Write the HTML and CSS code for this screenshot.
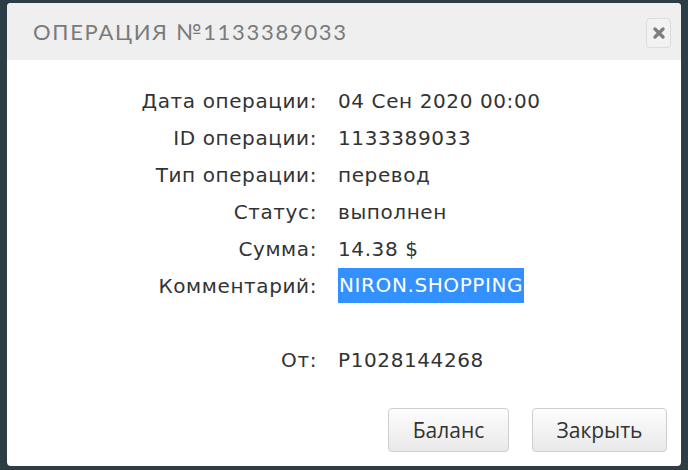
FILE: index.html
```html
<!DOCTYPE html>
<html lang="ru">
<head>
<meta charset="utf-8">
<link rel="stylesheet" href="styles.css">
</head>
<body>
<div class="modal">
  <div class="modal-header">
    <h3 class="modal-title">ОПЕРАЦИЯ №1133389033</h3>
    <button class="close-btn" type="button" aria-label="close">
      <svg width="12" height="12" viewBox="0 0 12 12"><path d="M2 2 L10 10 M10 2 L2 10" stroke="#7d7d7d" stroke-width="3.2" stroke-linecap="round"/></svg>
    </button>
  </div>
  <div class="modal-body">
    <div class="info">
      <div class="lbl">Дата операции:</div><div class="val">04 Сен 2020 00:00</div>
      <div class="lbl">ID операции:</div><div class="val">1133389033</div>
      <div class="lbl">Тип операции:</div><div class="val">перевод</div>
      <div class="lbl">Статус:</div><div class="val">выполнен</div>
      <div class="lbl">Сумма:</div><div class="val">14.38 $</div>
      <div class="lbl">Комментарий:</div><div class="val"><span class="sel">NIRON.SHOPPING</span></div>
      <div class="lbl"></div><div class="val"></div>
      <div class="lbl">От:</div><div class="val">P1028144268</div>
    </div>
  </div>
  <div class="modal-footer">
    <button class="btn" type="button">Баланс</button>
    <button class="btn" type="button">Закрыть</button>
  </div>
</div>
</body>
</html>
```
FILE: styles.css
```css
html, body {
  margin: 0;
  padding: 0;
  background: #2d3d46;
}
body {
  padding: 3px 7px 0 7px;
  height: 470px;
  box-sizing: border-box;
  font-family: "DejaVu Sans", sans-serif;
}
.modal {
  width: 674px;
  height: 463px;
  background: #fff;
  border-radius: 4px;
  overflow: hidden;
  display: flex;
  flex-direction: column;
}
.modal-header {
  height: 57px;
  background: #efefef;
  display: flex;
  align-items: center;
  justify-content: space-between;
  padding: 0 10px 0 26px;
  flex: none;
}
.modal-title {
  margin: 0;
  font-family: "Lato", sans-serif;
  font-weight: 400;
  font-size: 22px;
  letter-spacing: 1.7px;
  color: #7b7b7b;
}
.close-btn {
  width: 25px;
  height: 30px;
  border: 1px solid #dcdcdc;
  border-radius: 4px;
  background: #f2f2f2;
  display: flex;
  align-items: center;
  justify-content: center;
  padding: 0;
  margin-top: 2px;
}
.modal-body {
  flex: 1;
  padding-top: 22px;
}
.info {
  display: grid;
  grid-template-columns: 310px auto;
  column-gap: 21px;
  grid-auto-rows: 37px;
  font-size: 20px;
  letter-spacing: 0.6px;
  color: #333;
}
.lbl, .val {
  display: flex;
  align-items: center;
}
.lbl { justify-content: flex-end; }
.sel {
  background: #3390ff;
  color: #fff;
  line-height: 35px;
  padding: 0 1px;
}
.modal-footer {
  flex: none;
  display: flex;
  justify-content: flex-end;
  gap: 23px;
  padding: 0 14px 14px 0;
}
.btn {
  height: 44px;
  padding: 0;
  font-family: "Open Sans", "DejaVu Sans", sans-serif;
  font-size: 21px;
  color: #333;
  border: 1px solid #cfcfcf;
  border-radius: 4px;
  background: linear-gradient(#fdfdfd, #e9e9e9);
}
.btn:first-child { width: 121px; }
.btn:last-child { width: 135px; }
```
